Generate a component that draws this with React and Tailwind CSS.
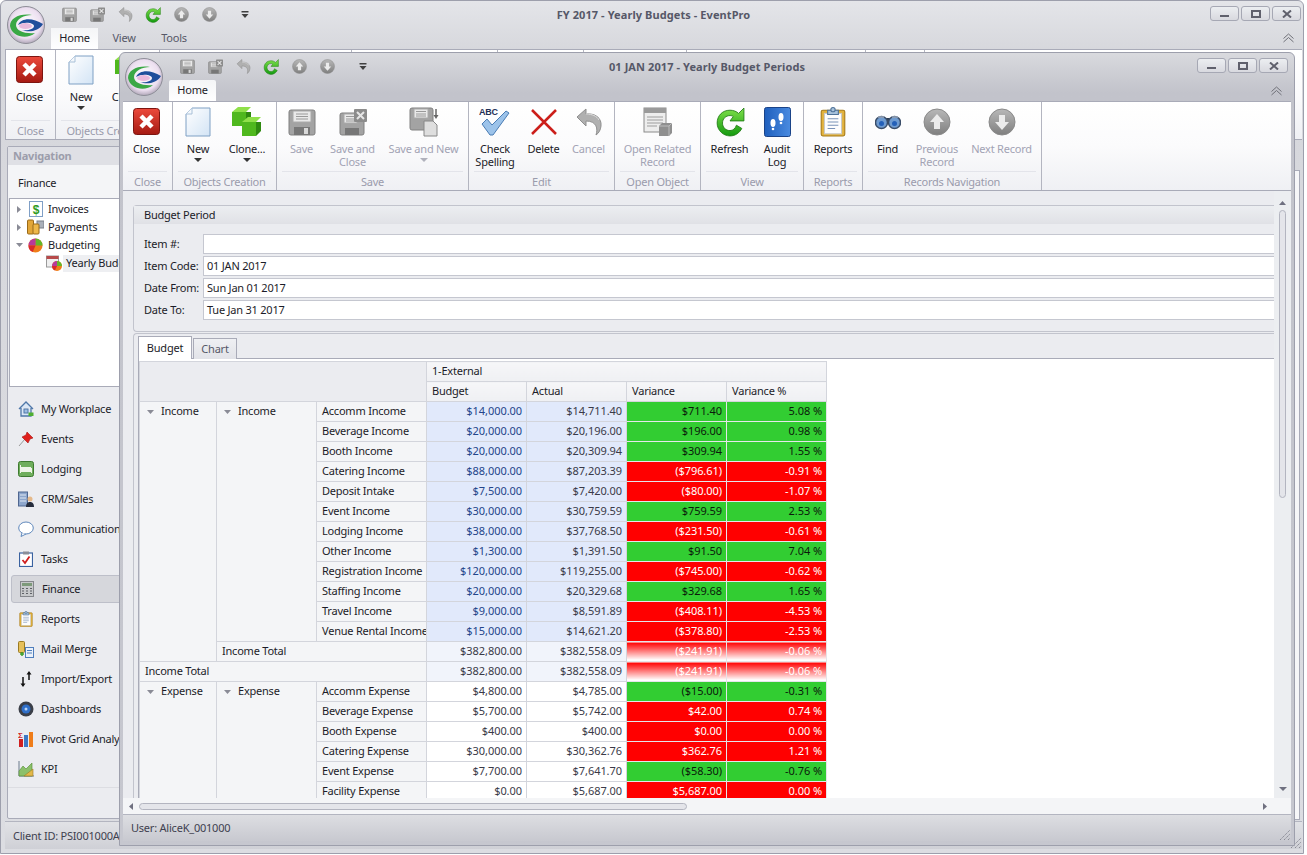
import React from 'react';

const incomeRows = [
  ['Accomm Income', '$14,000.00', '$14,711.40', '$711.40', '5.08 %', 1],
  ['Beverage Income', '$20,000.00', '$20,196.00', '$196.00', '0.98 %', 1],
  ['Booth Income', '$20,000.00', '$20,309.94', '$309.94', '1.55 %', 1],
  ['Catering Income', '$88,000.00', '$87,203.39', '($796.61)', '-0.91 %', 0],
  ['Deposit Intake', '$7,500.00', '$7,420.00', '($80.00)', '-1.07 %', 0],
  ['Event Income', '$30,000.00', '$30,759.59', '$759.59', '2.53 %', 1],
  ['Lodging Income', '$38,000.00', '$37,768.50', '($231.50)', '-0.61 %', 0],
  ['Other Income', '$1,300.00', '$1,391.50', '$91.50', '7.04 %', 1],
  ['Registration Income', '$120,000.00', '$119,255.00', '($745.00)', '-0.62 %', 0],
  ['Staffing Income', '$20,000.00', '$20,329.68', '$329.68', '1.65 %', 1],
  ['Travel Income', '$9,000.00', '$8,591.89', '($408.11)', '-4.53 %', 0],
  ['Venue Rental Income', '$15,000.00', '$14,621.20', '($378.80)', '-2.53 %', 0],
];

const expenseRows = [
  ['Accomm Expense', '$4,800.00', '$4,785.00', '($15.00)', '-0.31 %', 1],
  ['Beverage Expense', '$5,700.00', '$5,742.00', '$42.00', '0.74 %', 0],
  ['Booth Expense', '$400.00', '$400.00', '$0.00', '0.00 %', 0],
  ['Catering Expense', '$30,000.00', '$30,362.76', '$362.76', '1.21 %', 0],
  ['Event Expense', '$7,700.00', '$7,641.70', '($58.30)', '-0.76 %', 1],
  ['Facility Expense', '$0.00', '$5,687.00', '$5,687.00', '0.00 %', 0],
];

const Logo = ({ size = 38 }) => (
  <svg width={size} height={size} viewBox="0 0 38 38">
    <defs>
      <radialGradient id="orb" cx="50%" cy="45%" r="58%">
        <stop offset="0%" stopColor="#ffffff" />
        <stop offset="70%" stopColor="#ecdff0" />
        <stop offset="100%" stopColor="#a59dae" />
      </radialGradient>
    </defs>
    <circle cx="19" cy="19" r="18.500" fill="url(#orb)" stroke="#8e8e98" />
    <path d="M3 20C3 12 13 7 25 9C17 9 9 13 9 19C9 25 18 28 28 27C20 34 5 31 3 20Z" fill="#3aa845" />
    <path d="M11 19C14 12 25 11 36 18C32 25 22 27 15 24C21 25 27 23 27 20C27 17 18 15 11 19Z" fill="#1f4f9c" />
    <ellipse cx="18.500" cy="20" rx="6.500" ry="3" fill="#e9b9dc" />
  </svg>
);

const Floppy = ({ size = 28 }) => (
  <svg width={size} height={size} viewBox="0 0 28 28">
    <rect x="1" y="2" width="26" height="25" rx="2" fill="#a3a3a3" stroke="#808080" />
    <rect x="5" y="3" width="18" height="11" fill="#e9e9e9" stroke="#aaa" />
    <path d="M8 6h12M8 8.500h12M8 11h12" stroke="#9a9a9a" />
    <rect x="6" y="19" width="16" height="8" fill="#777" />
    <rect x="16" y="20" width="4" height="6" fill="#d8d8d8" />
  </svg>
);

const SaveClose = ({ size = 28 }) => (
  <svg width={size} height={size} viewBox="0 0 28 28">
    <rect x="1" y="5" width="24" height="22" rx="2" fill="#a3a3a3" stroke="#808080" />
    <rect x="5" y="6" width="13" height="9" fill="#e9e9e9" stroke="#aaa" />
    <path d="M7 8.500h9M7 11h9M7 13h9" stroke="#9a9a9a" />
    <rect x="6" y="20" width="14" height="7" fill="#777" />
    <rect x="15" y="1" width="13" height="13" rx="1" fill="#8c8c8c" />
    <path d="M18 4l7 7M25 4l-7 7" stroke="#e6e6e6" strokeWidth="2" />
  </svg>
);

const SaveNew = () => (
  <svg width="30" height="30" viewBox="0 0 30 30">
    <rect x="1" y="1" width="23" height="22" rx="2" fill="#a3a3a3" stroke="#808080" />
    <rect x="5" y="2" width="14" height="9" fill="#e9e9e9" stroke="#aaa" />
    <path d="M7 4.500h10M7 7h10M7 9h10" stroke="#9a9a9a" />
    <path d="M27 2v8" stroke="#666" strokeWidth="1.500" />
    <path d="M24.500 8l2.500 4 2.500-4z" fill="#666" />
    <path d="M15 14h9l4 4v11H15z" fill="#dedede" stroke="#888" />
  </svg>
);

const GrayUndo = ({ size = 28 }) => (
  <svg width={size} height={size} viewBox="0 0 28 28">
    <path d="M2 9L11 1V6C20 5 27 10 26 18C25.500 22 24 25 21 27C23 21 22 13 11 13V18Z" fill="#b0b0b0" stroke="#8f8f8f" strokeLinejoin="round" />
    <path d="M11 6C17 6 22 8 24 12" stroke="#e0e0e0" fill="none" />
  </svg>
);

const Refresh = ({ size = 28 }) => (
  <svg width={size} height={size} viewBox="0 0 28 28">
    <path d="M14 3C7 3 2 8 2 15C2 22 8 27 14 27C19 27 23 24 25 20L20 17C19 20 17 22 14 22C10 22 7 19 7 15C7 11 10 8 14 8C15 8 16.500 8.300 17 9L14 13H27V1L22 6C20 4 17 3 14 3Z" fill="url(#grn)" stroke="#1d7a12" strokeWidth="0.800" />
    <defs>
      <linearGradient id="grn" x1="0" y1="0" x2="0" y2="1">
        <stop offset="0%" stopColor="#7ee04a" />
        <stop offset="100%" stopColor="#149a10" />
      </linearGradient>
    </defs>
  </svg>
);

const ArrowCircle = ({ size = 28, down }) => (
  <svg width={size} height={size} viewBox="0 0 28 28">
    <defs>
      <linearGradient id="gcir" x1="0" y1="0" x2="0" y2="1">
        <stop offset="0%" stopColor="#b8b8b8" />
        <stop offset="100%" stopColor="#7f7f7f" />
      </linearGradient>
    </defs>
    <circle cx="14" cy="14" r="13" fill="url(#gcir)" stroke="#8a8a8a" />
    <path d={down ? 'M11 7h6v7h4l-7 8-7-8h4z' : 'M11 21h6v-7h4l-7-8-7 8h4z'} fill="#ececec" />
  </svg>
);

const CloseIcon = () => (
  <svg width="27" height="27" viewBox="0 0 27 27">
    <defs>
      <linearGradient id="redg" x1="0" y1="0" x2="0" y2="1">
        <stop offset="0%" stopColor="#ec4a3c" />
        <stop offset="100%" stopColor="#a51a12" />
      </linearGradient>
    </defs>
    <rect x="0.500" y="0.500" width="26" height="26" rx="3" fill="url(#redg)" stroke="#7d1510" />
    <path d="M8 8l11 11M19 8L8 19" stroke="#fff" strokeWidth="4.500" />
  </svg>
);

const NewDoc = () => (
  <svg width="26" height="30" viewBox="0 0 26 30">
    <defs>
      <linearGradient id="docg" x1="0" y1="0" x2="1" y2="1">
        <stop offset="0%" stopColor="#ffffff" />
        <stop offset="100%" stopColor="#d3e4f5" />
      </linearGradient>
    </defs>
    <path d="M7 1H25V29H1V7Z" fill="url(#docg)" stroke="#7ea0c4" />
    <path d="M7 1V7H1" fill="#f4f8fc" stroke="#a8c0d8" />
  </svg>
);

const Cube = ({ x, y }) => (
  <g transform={`translate(${x} ${y})`}>
    <path d="M0 5L6 0H19L14 5Z" fill="#8fe04a" />
    <path d="M14 5H19V0V14L14 19Z" fill="#2f8a10" />
    <rect x="0" y="5" width="14" height="14" fill="#4fb81e" />
  </g>
);

const CloneIcon = () => (
  <svg width="30" height="30" viewBox="0 0 30 30">
    <Cube x="0" y="0" />
    <Cube x="10" y="10" />
  </svg>
);

const CheckIcon = () => (
  <svg width="32" height="30" viewBox="0 0 32 30">
    <text x="0" y="8" fontSize="9" fontWeight="700" fontFamily="Liberation Sans, sans-serif" fill="#1f3056">ABC</text>
    <path d="M3 17L8 12L13 18L27 4L30 6L14 28H11Z" fill="#9cc3ea" stroke="#4a7cb4" strokeLinejoin="round" />
  </svg>
);

const RedX = () => (
  <svg width="28" height="28" viewBox="0 0 28 28">
    <path d="M2 2L26 26M26 2L2 26" stroke="#cc1f1a" strokeWidth="2.500" />
  </svg>
);

const RelatedIcon = () => (
  <svg width="30" height="30" viewBox="0 0 30 30">
    <rect x="1" y="1" width="22" height="24" fill="#ededed" stroke="#8a8a8a" />
    <rect x="1" y="1" width="22" height="5" fill="#9a9a9a" />
    <path d="M4 10h16M4 13h16M4 16h16M4 19h10" stroke="#9d9d9d" />
    <path d="M16 19l3-3h10v10l-3 3H16z" fill="#8f8f8f" />
    <path d="M16 19h10v10M26 19l3-3" stroke="#bdbdbd" fill="none" />
  </svg>
);

const AuditIcon = () => (
  <svg width="27" height="30" viewBox="0 0 27 30">
    <defs>
      <linearGradient id="bookg" x1="0" y1="0" x2="1" y2="0">
        <stop offset="0%" stopColor="#1f5fbd" />
        <stop offset="100%" stopColor="#4a8be0" />
      </linearGradient>
    </defs>
    <rect x="0.500" y="0.500" width="26" height="29" rx="2" fill="url(#bookg)" stroke="#1a4388" />
    <ellipse cx="17" cy="10" rx="2.500" ry="4" fill="#fff" />
    <circle cx="17" cy="16" r="1.300" fill="#fff" />
    <ellipse cx="9" cy="16" rx="2.500" ry="4" fill="#fff" />
    <circle cx="9" cy="22" r="1.300" fill="#fff" />
  </svg>
);

const ClipIcon = ({ size = 28 }) => (
  <svg width={size} height={size} viewBox="0 0 28 28">
    <rect x="3" y="3" width="22" height="24" rx="1.500" fill="#e2b23c" stroke="#a57a18" />
    <rect x="6" y="6" width="16" height="19" fill="#fdfdfd" stroke="#c9c9c9" />
    <path d="M9 11h10M9 14h10M9 17h10M9 20h7" stroke="#7a93b8" />
    <path d="M9 3h10v4H9z" fill="#a7c2dc" stroke="#4f7399" />
    <circle cx="14" cy="2.500" r="2" fill="#a7c2dc" stroke="#4f7399" />
  </svg>
);

const Binoculars = () => (
  <svg width="26" height="16" viewBox="0 0 26 16">
    <rect x="9" y="4" width="8" height="6" fill="#2f3d52" />
    <circle cx="6.500" cy="8.500" r="6" fill="#6f9bd0" stroke="#3a4d68" strokeWidth="1.500" />
    <circle cx="19.500" cy="8.500" r="6" fill="#6f9bd0" stroke="#3a4d68" strokeWidth="1.500" />
    <circle cx="6.500" cy="9.500" r="2.500" fill="#2460b8" />
    <circle cx="19.500" cy="9.500" r="2.500" fill="#2460b8" />
    <path d="M3 3h6M17 3h6" stroke="#9aa8bb" strokeWidth="1.500" />
  </svg>
);

const DropBar = ({ color = '#404040' }) => (
  <svg width="8" height="7" viewBox="0 0 8 7">
    <rect x="0.500" y="0" width="7" height="1.500" fill={color} />
    <path d="M0.500 3h7L4 7z" fill={color} />
  </svg>
);

const Drop = ({ color = '#333' }) => (
  <svg width="8" height="4" viewBox="0 0 8 4">
    <path d="M0 0h8L4 4z" fill={color} />
  </svg>
);

const Collapse = () => (
  <svg width="13" height="10" viewBox="0 0 13 10" fill="none">
    <path d="M1.500 5.500L6.500 1L11.500 5.500M1.500 9L6.500 4.500L11.500 9" stroke="#6f7078" />
  </svg>
);

const WinButtons = () => (
  <div className="flex gap-[2px]">
    {['min', 'max', 'close'].map((k) => (
      <div key={k} className="flex h-[15px] w-[29px] items-center justify-center rounded-[3px] border border-[#a6a8b4] bg-gradient-to-b from-[#eceef1] to-[#d8d9df]">
        {k === 'min' && <div className="mt-[5px] h-[2px] w-[9px] bg-[#5f606c]" />}
        {k === 'max' && <div className="h-[8px] w-[10px] border-2 border-[#5f606c]" />}
        {k === 'close' && (
          <svg width="10" height="8" viewBox="0 0 10 8"><path d="M1 0.500L9 7.500M9 0.500L1 7.500" stroke="#5f606c" strokeWidth="2" /></svg>
        )}
      </div>
    ))}
  </div>
);

const QuickBar = () => (
  <div className="flex items-center">
    <div className="flex h-[16px] w-[28px] justify-center"><Floppy size={15} /></div>
    <div className="flex h-[16px] w-[28px] justify-center"><SaveClose size={15} /></div>
    <div className="flex h-[16px] w-[28px] justify-center"><GrayUndo size={15} /></div>
    <div className="flex h-[16px] w-[28px] justify-center"><Refresh size={16} /></div>
    <div className="flex h-[16px] w-[28px] justify-center"><ArrowCircle size={15} /></div>
    <div className="flex h-[16px] w-[28px] justify-center"><ArrowCircle size={15} down /></div>
    <div className="flex h-[16px] w-[44px] items-center justify-center"><DropBar /></div>
  </div>
);

const RibbonButton = ({ icon, label, width, disabled, arrow }) => (
  <div className="flex h-full flex-col items-center" style={{ width }}>
    <div className="flex h-[36px] w-full items-center justify-center pt-[1px]">{icon}</div>
    <div className={`mt-[3px] text-center leading-[13px] ${disabled ? 'text-[#a2a3b4]' : 'text-[#1c1c28]'}`}>
      {label.map((line) => (
        <div key={line} className="whitespace-nowrap">{line}</div>
      ))}
    </div>
    {arrow && <div className="mt-[3px] flex"><Drop color={disabled ? '#b0b1bc' : '#333'} /></div>}
  </div>
);

const RibbonGroup = ({ width, caption, children }) => (
  <div className="flex h-full shrink-0 flex-col border-r border-[#b3b5c0]" style={{ width }}>
    <div className="flex h-[72px] pt-[1px]">{children}</div>
    <div className="mx-[5px] h-px bg-[#e3e4ea]" />
    <div className="flex flex-1 items-center justify-center whitespace-nowrap pt-[2px] text-[#9a9bac]">{caption}</div>
  </div>
);

const closeGroup = (
  <RibbonGroup width={50} caption="Close">
    <RibbonButton width={47} icon={<CloseIcon />} label={['Close']} />
  </RibbonGroup>
);

const objectsGroup = (
  <RibbonGroup width={104} caption="Objects Creation">
    <RibbonButton width={50} icon={<NewDoc />} label={['New']} arrow />
    <RibbonButton width={48} icon={<CloneIcon />} label={['Clone...']} arrow />
  </RibbonGroup>
);

const ribbonGradient = 'bg-gradient-to-b from-[#ffffff] via-[#fbfbfc] to-[#eff0f4]';

const InnerRibbon = () => (
  <div className={`flex h-[90px] shrink-0 border-b border-t border-[#a9abb8] ${ribbonGradient}`}>
    {closeGroup}
    {objectsGroup}
    <RibbonGroup width={192} caption="Save">
      <RibbonButton width={49} disabled icon={<Floppy />} label={['Save']} />
      <RibbonButton width={53} disabled icon={<SaveClose />} label={['Save and', 'Close']} />
      <RibbonButton width={89} disabled icon={<SaveNew />} label={['Save and New']} arrow />
    </RibbonGroup>
    <RibbonGroup width={146} caption="Edit">
      <RibbonButton width={52} icon={<CheckIcon />} label={['Check', 'Spelling']} />
      <RibbonButton width={45} icon={<RedX />} label={['Delete']} />
      <RibbonButton width={45} disabled icon={<GrayUndo />} label={['Cancel']} />
    </RibbonGroup>
    <RibbonGroup width={86} caption="Open Object">
      <RibbonButton width={85} disabled icon={<RelatedIcon />} label={['Open Related', 'Record']} />
    </RibbonGroup>
    <RibbonGroup width={103} caption="View">
      <RibbonButton width={57} icon={<Refresh size={30} />} label={['Refresh']} />
      <RibbonButton width={38} icon={<AuditIcon />} label={['Audit', 'Log']} />
    </RibbonGroup>
    <RibbonGroup width={59} caption="Reports">
      <RibbonButton width={58} icon={<ClipIcon size={30} />} label={['Reports']} />
    </RibbonGroup>
    <RibbonGroup width={179} caption="Records Navigation">
      <RibbonButton width={49} icon={<Binoculars />} label={['Find']} />
      <RibbonButton width={50} disabled icon={<ArrowCircle />} label={['Previous', 'Record']} />
      <RibbonButton width={79} disabled icon={<ArrowCircle down />} label={['Next Record']} />
    </RibbonGroup>
  </div>
);

const OuterRibbon = () => (
  <div className={`flex h-[91px] shrink-0 border-b border-l border-t border-[#a9abb8] ${ribbonGradient}`}>
    {closeGroup}
    {objectsGroup}
    {[192, 146, 86, 103, 179, 59].map((w) => (
      <div key={w} className="h-full shrink-0 border-r border-[#b3b5c0]" style={{ width: w }} />
    ))}
  </div>
);

const Field = ({ label, value }) => (
  <div className="flex h-[22px] items-center">
    <div className="w-[69px] shrink-0 whitespace-nowrap pl-[10px]">{label}</div>
    <div className="flex h-[20px] flex-1 items-center border border-r-0 border-[#c5c7d0] bg-white pl-[3px]">{value}</div>
  </div>
);

const Tri = () => (
  <svg className="inline-block align-[1px]" width="7" height="4" viewBox="0 0 7 4"><path d="M0 0h7L3.500 4z" fill="#8a8b96" /></svg>
);

const cellBase = 'h-[20px] border border-[#d3d5dc] whitespace-nowrap overflow-hidden p-0';
const numCell = 'pr-[4px] text-right tracking-[-0.05px]';
const hdr = `${cellBase} bg-gradient-to-b from-[#f6f6f8] to-[#eff0f3] text-left pl-[5px] font-normal`;
const rowHd = `${cellBase} bg-[#f4f5f7] text-left pl-[5px] font-normal`;

const DataRow = ({ row, tint, lead }) => {
  const [name, budget, actual, variance, pct, good] = row;
  const bg = tint ? 'bg-[#e1e9fb]' : 'bg-white';
  const colour = good ? 'bg-[#32cd32] text-[#0b1a0b]' : 'bg-[#ff0000] text-white';
  return (
    <tr>
      {lead}
      <td className={rowHd}>{name}</td>
      <td className={`${cellBase} ${bg} ${numCell} ${tint ? 'text-[#24458a]' : 'text-[#3a3a48]'}`}>{budget}</td>
      <td className={`${cellBase} ${bg} ${numCell} text-[#3a3a48]`}>{actual}</td>
      <td className={`${cellBase} ${colour} border-[#e4e6ea] ${numCell}`}>{variance}</td>
      <td className={`${cellBase} ${colour} border-[#e4e6ea] ${numCell}`}>{pct}</td>
    </tr>
  );
};

const TotalValues = () => (
  <>
    <td className={`${cellBase} bg-[#f1f4fb] ${numCell} text-[#3a3a48]`}>$382,800.00</td>
    <td className={`${cellBase} bg-[#f1f4fb] ${numCell} text-[#3a3a48]`}>$382,558.09</td>
    <td className={`${cellBase} border-[#e4e6ea] bg-[linear-gradient(#ff0000_0%,#ffffff_92%)] ${numCell} text-white`}>($241.91)</td>
    <td className={`${cellBase} border-[#e4e6ea] bg-[linear-gradient(#ff0000_0%,#ffffff_92%)] ${numCell} text-white`}>-0.06 %</td>
  </>
);

const LeadCell = ({ span, label }) => (
  <td rowSpan={span} className={`${rowHd} !pl-0 align-top`}>
    <div className="flex h-[19px] items-center">
      <div className="flex w-[21px] justify-center"><Tri /></div>
      <span>{label}</span>
    </div>
  </td>
);

const PivotGrid = () => (
  <table className="table-fixed border-collapse" style={{ width: 687 }}>
    <colgroup>
      <col className="w-[77px]" />
      <col className="w-[100px]" />
      <col className="w-[110px]" />
      <col className="w-[100px]" />
      <col className="w-[100px]" />
      <col className="w-[100px]" />
      <col className="w-[100px]" />
    </colgroup>
    <tbody>
      <tr>
        <td colSpan={3} rowSpan={2} className={`${cellBase} bg-[#ebecf0]`} />
        <td colSpan={4} className={hdr}>1-External</td>
      </tr>
      <tr>
        <td className={hdr}>Budget</td>
        <td className={hdr}>Actual</td>
        <td className={hdr}>Variance</td>
        <td className={hdr}>Variance %</td>
      </tr>
      {incomeRows.map((row, i) => (
        <DataRow
          key={row[0]}
          row={row}
          tint
          lead={i === 0 ? (
            <>
              <LeadCell span={13} label="Income" />
              <LeadCell span={12} label="Income" />
            </>
          ) : null}
        />
      ))}
      <tr>
        <td colSpan={2} className={rowHd}>Income Total</td>
        <TotalValues />
      </tr>
      <tr>
        <td colSpan={3} className={rowHd}>Income Total</td>
        <TotalValues />
      </tr>
      {expenseRows.map((row, i) => (
        <DataRow
          key={row[0]}
          row={row}
          lead={i === 0 ? (
            <>
              <LeadCell span={6} label="Expense" />
              <LeadCell span={6} label="Expense" />
            </>
          ) : null}
        />
      ))}
    </tbody>
  </table>
);

const ScrollV = () => (
  <div className="flex w-[17px] shrink-0 flex-col items-center bg-[#eceef1]">
    <div className="mt-[10px]"><svg width="7" height="4" viewBox="0 0 7 4" className="block"><path d="M0 4h7L3.500 0z" fill="#6f7080" /></svg></div>
    <div className="mt-[5px] h-[288px] w-[7px] rounded-[4px] border border-[#b3b5c0] bg-[#e4e5ea]" />
    <div className="flex-1" />
    <div className="mb-[7px]"><Drop color="#6f7080" /></div>
  </div>
);

const ScrollH = () => (
  <div className="flex h-[16px] shrink-0 items-center bg-[#f4f5f7]">
    <svg className="ml-[6px]" width="4" height="7" viewBox="0 0 4 7"><path d="M4 0v7L0 3.500z" fill="#6f7080" /></svg>
    <div className="ml-[6px] h-[7px] w-[548px] rounded-[4px] border border-[#b3b5c0] bg-[#e4e5ea]" />
    <div className="flex-1" />
    <svg className="mr-[24px]" width="4" height="7" viewBox="0 0 4 7"><path d="M0 0v7L4 3.500z" fill="#6f7080" /></svg>
  </div>
);

const Grip = () => (
  <svg width="12" height="12" viewBox="0 0 12 12"><path d="M1 11L11 1M5 11L11 5M9 11L11 9" stroke="#8a8b96" strokeDasharray="1.500 0.700" /></svg>
);

// yearly budget period window, floats over the main one
const BudgetWindow = () => (
  <div className="absolute left-[119px] top-[52px] flex h-[794px] w-[1176px] flex-col rounded-t-[6px] border border-[#9d9fac] bg-gradient-to-b from-[#d9dade] from-0% via-[#c2c3cb] via-[5%] to-[#c6c7cf] px-[3px] pb-[4px]">
    <div className="relative flex h-[27px] shrink-0 items-center">
      <div className="absolute left-[2px] top-[5px] z-10"><Logo /></div>
      <div className="ml-[50px]"><QuickBar /></div>
      <div className="absolute inset-x-0 top-[6px] text-center font-bold tracking-[0.08px] text-[#565868]">01 JAN 2017 - Yearly Budget Periods</div>
      <div className="absolute right-[3px] top-[5px]"><WinButtons /></div>
    </div>
    <div className="relative flex h-[21px] shrink-0 pl-[46px]">
      <div className="flex h-[21px] w-[47px] items-center justify-center rounded-t-[2px] bg-gradient-to-b from-[#f4f5f7] to-white text-[#1c1c28]">Home</div>
      <div className="absolute right-[8px] top-[6px]"><Collapse /></div>
    </div>
    <InnerRibbon />
    <div className="flex min-h-0 flex-1 flex-col bg-[#ebecf0]">
      <div className="flex min-h-0 flex-1">
        <div className="flex min-w-0 flex-1 flex-col overflow-hidden pl-[10px] pt-[14px]">
          <div className="h-[127px] shrink-0 rounded-l-[4px] border border-r-0 border-[#c2c4cd]">
            <div className="flex h-[18px] items-center bg-gradient-to-b from-[#eceef1] to-[#e0e1e6] pl-[10px]">Budget Period</div>
            <div className="pt-[9px]">
              <Field label="Item #:" value="" />
              <Field label="Item Code:" value="01 JAN 2017" />
              <Field label="Date From:" value="Sun Jan 01 2017" />
              <Field label="Date To:" value="Tue Jan 31 2017" />
            </div>
          </div>
          <div className="mt-[1px] flex min-h-0 flex-1 flex-col rounded-tl-[4px] border-l border-t border-[#c2c4cd] pl-[4px] pt-[2px]">
            <div className="relative z-10 flex h-[23px] shrink-0 items-end">
              <div className="flex h-[23px] w-[54px] items-center justify-center border border-b-0 border-[#a9abb8] bg-white">Budget</div>
              <div className="ml-[1px] flex h-[21px] w-[44px] items-center justify-center border border-b-0 border-[#a9abb8] bg-gradient-to-b from-[#eff0f3] to-[#e2e3e8] text-[#565868]">Chart</div>
            </div>
            <div className="-mt-px min-h-0 flex-1 overflow-hidden border-l border-t border-[#a9abb8] bg-white pt-[2px]">
              <PivotGrid />
            </div>
          </div>
        </div>
        <ScrollV />
      </div>
      <ScrollH />
    </div>
    <div className="relative flex h-[27px] shrink-0 items-center border-t border-[#b3b5c0] bg-gradient-to-b from-[#dddee2] to-[#c8c9d0] pl-[8px] text-[#40414f]">
      User: AliceK_001000
      <div className="absolute bottom-0 right-0"><Grip /></div>
    </div>
  </div>
);

const treeRows = [
  { label: 'Invoices', icon: 'invoice', arrow: 'right' },
  { label: 'Payments', icon: 'coins', arrow: 'right' },
  { label: 'Budgeting', icon: 'pie', arrow: 'down' },
];

const Pie = ({ size = 15 }) => (
  <svg width={size} height={size} viewBox="0 0 16 16">
    <circle cx="8" cy="8" r="7.500" fill="#ef7d1a" />
    <path d="M8 8L8 .5A7.500 7.500 0 0 1 15.500 8z" fill="#62b82a" />
    <path d="M8 8L.5 8A7.500 7.500 0 0 1 8 .5z" fill="#b73a9a" />
    <path d="M8 8L.5 8A7.500 7.500 0 0 0 5 15z" fill="#d92a2a" />
  </svg>
);

const YearlyIcon = () => (
  <svg width="16" height="16" viewBox="0 0 16 16">
    <rect x="0.500" y="1" width="12" height="11" fill="#efefef" stroke="#9a9a9a" />
    <rect x="0.500" y="1" width="12" height="3" fill="#b84a4a" />
    <g transform="translate(6 6)">
      <circle cx="5" cy="5" r="5" fill="#ef7d1a" />
      <path d="M5 5V0A5 5 0 0 1 10 5z" fill="#62b82a" />
      <path d="M5 5H0A5 5 0 0 1 5 0z" fill="#b73a9a" />
      <path d="M5 5H0A5 5 0 0 0 3 9.500z" fill="#d92a2a" />
    </g>
  </svg>
);

const TreeIcon = ({ name }) => {
  if (name === 'invoice') return (
    <svg width="14" height="16" viewBox="0 0 14 16">
      <rect x="0.500" y="0.500" width="13" height="15" fill="#fff" stroke="#7f9fc6" />
      <text x="7" y="12.500" textAnchor="middle" fontSize="12" fontWeight="700" fontFamily="Liberation Sans, sans-serif" fill="#2e9a1c">$</text>
    </svg>
  );
  if (name === 'coins') return (
    <svg width="17" height="16" viewBox="0 0 17 16">
      <rect x="10" y="2" width="7" height="7" fill="#aab0ba" stroke="#7b808a" />
      <rect x="0.500" y="1" width="6" height="14" rx="1" fill="#e2a638" stroke="#9a6a18" />
      <rect x="6" y="5" width="6" height="10" rx="1" fill="#eeb84a" stroke="#9a6a18" />
    </svg>
  );
  return <Pie />;
};

const navItems = ['My Workplace', 'Events', 'Lodging', 'CRM/Sales', 'Communications', 'Tasks', 'Finance', 'Reports', 'Mail Merge', 'Import/Export', 'Dashboards', 'Pivot Grid Analysis', 'KPI'];

const NavIcon = ({ name }) => {
  switch (name) {
    case 'My Workplace':
      return (
        <svg width="16" height="16" viewBox="0 0 16 16">
          <path d="M1 8L8 1L15 8M3 7V15H13V7" fill="#dbe7f5" stroke="#4f77a8" strokeWidth="1.300" />
          <rect x="6" y="8" width="4" height="4" fill="#9dbde0" stroke="#4f77a8" />
          <rect x="10.500" y="11.500" width="5" height="3.500" fill="#4fae32" />
        </svg>
      );
    case 'Events':
      return (
        <svg width="16" height="16" viewBox="0 0 16 16">
          <path d="M1 15L7 8" stroke="#9a9a9a" />
          <path d="M9 1L15 7L12 8L10 12L4 6L8 4Z" fill="#e0201c" stroke="#a51410" strokeWidth="0.600" />
        </svg>
      );
    case 'Lodging':
      return (
        <svg width="16" height="16" viewBox="0 0 16 16">
          <rect x="0.500" y="0.500" width="15" height="15" rx="2" fill="#6fae5c" stroke="#3e7a30" />
          <rect x="3" y="6" width="10" height="5" fill="#eef4e8" />
          <path d="M2.500 4v8M13.500 7v5" stroke="#eef4e8" />
        </svg>
      );
    case 'CRM/Sales':
      return (
        <svg width="17" height="16" viewBox="0 0 17 16">
          <rect x="0.500" y="1" width="9" height="14" fill="#8da6cc" stroke="#4f6690" />
          <path d="M2 4h6M2 7h6M2 10h6" stroke="#dfe7f2" />
          <circle cx="12" cy="8" r="2.500" fill="#e5b98a" />
          <path d="M8 16c0-4 2-5 4-5s4 1 4 5z" fill="#252c3c" />
        </svg>
      );
    case 'Communications':
      return (
        <svg width="16" height="16" viewBox="0 0 16 16">
          <ellipse cx="8" cy="7" rx="7.300" ry="6" fill="#fff" stroke="#5f88bc" />
          <path d="M4 12L3 15.500L8 13" fill="#fff" stroke="#5f88bc" />
        </svg>
      );
    case 'Tasks':
      return (
        <svg width="14" height="16" viewBox="0 0 14 16">
          <rect x="0.500" y="2" width="13" height="13.500" fill="#fff" stroke="#3a62a0" strokeWidth="1.200" />
          <rect x="4" y="0.500" width="6" height="3" fill="#8a8e98" />
          <path d="M3.500 9L6 12L10.500 5.500" stroke="#d01f1f" strokeWidth="1.800" fill="none" />
        </svg>
      );
    case 'Finance':
      return (
        <svg width="14" height="16" viewBox="0 0 14 16">
          <rect x="0.500" y="0.500" width="13" height="15" fill="#c7c9cb" stroke="#85878c" />
          <rect x="2" y="2" width="10" height="3" fill="#7d9a7a" />
          <path d="M2 7.500h2M6 7.500h2M10 7.500h2M2 10h2M6 10h2M10 10h2M2 12.500h2M6 12.500h2M10 12.500h2" stroke="#5f6167" strokeWidth="1.200" />
        </svg>
      );
    case 'Reports':
      return <ClipIcon size={16} />;
    case 'Mail Merge':
      return (
        <svg width="16" height="17" viewBox="0 0 16 17">
          <rect x="0.500" y="0.500" width="6" height="11" rx="1" fill="#e6c05a" stroke="#9a7a22" />
          <rect x="7.500" y="6.500" width="8" height="10" fill="#eaf1fa" stroke="#4f7ebc" />
          <path d="M9 9.500h5M9 12h5" stroke="#4f7ebc" />
          <path d="M2 13h4M4 11v4" stroke="#3fa028" strokeWidth="1.500" />
        </svg>
      );
    case 'Import/Export':
      return (
        <svg width="12" height="16" viewBox="0 0 12 16">
          <path d="M3 6v7M9 9V2" stroke="#111" strokeWidth="1.500" />
          <path d="M0.500 12.500h5L3 16zM6.500 3.500h5L9 0z" fill="#111" />
        </svg>
      );
    case 'Dashboards':
      return (
        <svg width="16" height="16" viewBox="0 0 16 16">
          <circle cx="8" cy="8" r="7.500" fill="#3b3f48" />
          <circle cx="8" cy="8" r="4.500" fill="#2f6fc8" />
          <circle cx="8" cy="8" r="1.500" fill="#bcd6f5" />
        </svg>
      );
    case 'Pivot Grid Analysis':
      return (
        <svg width="16" height="16" viewBox="0 0 16 16">
          <text x="0" y="7" fontSize="8" fontWeight="700" fill="#d01f1f" fontFamily="Liberation Sans, sans-serif">Σ</text>
          <rect x="1" y="8" width="4" height="8" fill="#d01f1f" />
          <rect x="6" y="4" width="4" height="12" fill="#3f78c4" />
          <rect x="11" y="1" width="4" height="15" fill="#ef7d1a" />
        </svg>
      );
    default:
      return (
        <svg width="16" height="16" viewBox="0 0 16 16">
          <path d="M1 0V15H16" stroke="#6b7a8c" fill="none" />
          <path d="M1 10L5 5L8 8L14 2V15H1Z" fill="#8cc06a" stroke="#4f8a30" strokeWidth="0.600" />
          <path d="M6 15L15 8V15Z" fill="#e2b84a" stroke="#9a7a22" strokeWidth="0.600" />
        </svg>
      );
  }
};

const NavPanel = () => (
  <div className="flex h-full w-[190px] shrink-0 flex-col rounded-[2px] border border-[#a9abb8] bg-[#ebecf0]">
    <div className="flex h-[18px] shrink-0 items-center bg-[#dfe0e5] pl-[5px] font-bold text-[#9c9dab]">Navigation</div>
    <div className="flex h-[33px] shrink-0 items-center bg-[#f4f5f7] pl-[10px] pt-[3px]">Finance</div>
    <div className="mx-px h-[189px] shrink-0 border border-[#a9abb8] bg-white pl-[3px] pt-px">
      {treeRows.map((r) => (
        <div key={r.label} className="flex h-[18px] items-center">
          <div className="flex w-[12px] justify-center">
            {r.arrow === 'right' ? (
              <svg width="4" height="7" viewBox="0 0 4 7"><path d="M0 0v7L4 3.500z" fill="#8a8b96" /></svg>
            ) : (
              <svg width="7" height="4" viewBox="0 0 7 4"><path d="M0 0h7L3.500 4z" fill="#8a8b96" /></svg>
            )}
          </div>
          <div className="flex w-[21px] justify-center"><TreeIcon name={r.icon} /></div>
          <span className="ml-[2px]">{r.label}</span>
        </div>
      ))}
      <div className="flex h-[18px] items-center pl-[33px]">
        <YearlyIcon />
        <span className="ml-[1px] flex h-[17px] flex-1 items-center whitespace-nowrap bg-[#eeeff2] pl-[3px]">Yearly Budgeting Periods</span>
      </div>
    </div>
    <div className="h-[7px] shrink-0" />
    <div>
      {navItems.map((item) => (
        <div key={item} className="flex h-[30px] items-center px-[3px]">
          <div className={`flex h-[28px] flex-1 items-center rounded-[3px] ${item === 'Finance' ? 'border border-[#bdbfc9] bg-[#d6d7dc]' : ''}`}>
            <div className="flex w-[30px] justify-center"><NavIcon name={item} /></div>
            <span className="whitespace-nowrap">{item}</span>
          </div>
        </div>
      ))}
    </div>
    <div className="mt-[3px] h-px bg-[#dcdde2]" />
  </div>
);

export default function App() {
  return (
    <div className="relative h-[855px] w-[1307px] overflow-hidden bg-white text-[11px] tracking-[-0.22px] text-[#1c1c28] [font-family:'Noto_Sans',sans-serif]">
      <div className="flex h-[854px] w-[1304px] flex-col rounded-t-[6px] border border-[#9d9fac] bg-gradient-to-b from-[#e4e5e9] from-0% via-[#d6d7dc] via-[6%] to-[#dcdde2] pb-[4px] pl-[4px] pr-[1px]">
        <div className="relative flex h-[27px] shrink-0 items-center">
          <div className="absolute left-[2px] top-[5px]"><Logo /></div>
          <div className="ml-[50px]"><QuickBar /></div>
          <div className="absolute inset-x-0 top-[6px] text-center font-bold tracking-[0.08px] text-[#565868]">FY 2017 - Yearly Budgets - EventPro</div>
          <div className="absolute right-[1px] top-[5px]"><WinButtons /></div>
        </div>
        <div className="relative flex h-[21px] shrink-0 pl-[46px]">
          <div className="flex h-[21px] w-[47px] items-center justify-center bg-gradient-to-b from-[#f4f5f7] to-white">Home</div>
          <div className="flex w-[52px] items-center justify-center text-[#565868]">View</div>
          <div className="flex w-[48px] items-center justify-center text-[#565868]">Tools</div>
          <div className="absolute right-[7px] top-[5px]"><Collapse /></div>
        </div>
        <OuterRibbon />
        <div className="flex min-h-0 flex-1 pl-[2px] pt-[6px]">
          <NavPanel />
          <div className="flex-1" />
          <div className="mr-[2px] mt-[24px] h-[650px] w-[6px] border border-[#a9abb8] bg-[#f6f6f8]" />
        </div>
        <div className="mt-[2px] flex h-[28px] shrink-0 items-center border-t border-[#b3b5c0] bg-gradient-to-b from-[#e1e2e6] to-[#cfd0d6] pl-[8px] pt-[2px] text-[#40414f]">
          Client ID: PSI001000Admin
          <div className="ml-auto self-end"><Grip /></div>
        </div>
      </div>
      <BudgetWindow />
    </div>
  );
}
